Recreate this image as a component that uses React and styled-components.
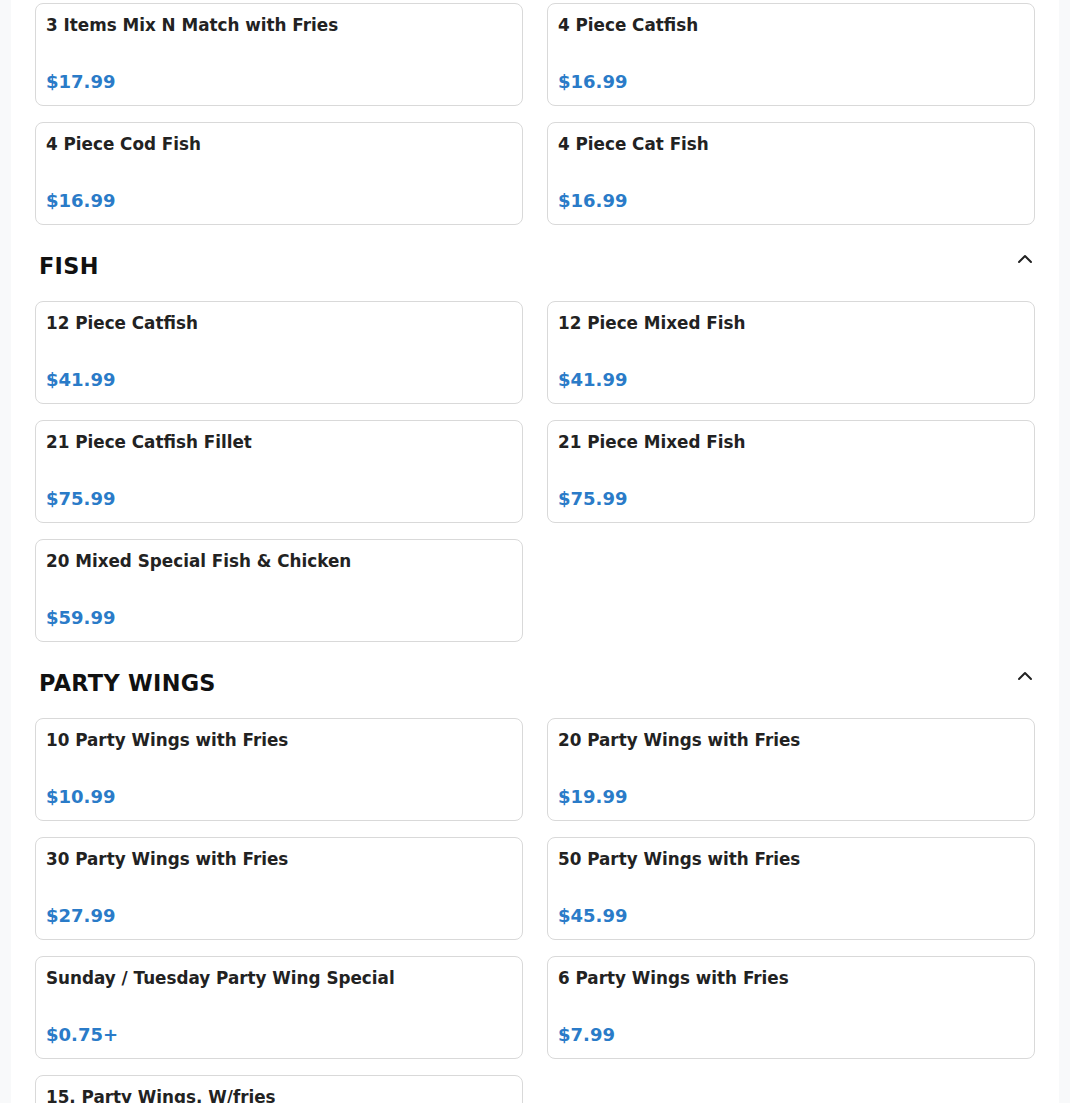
import React from 'react';
import styled, { createGlobalStyle } from 'styled-components';
import { ChevronUp } from 'lucide-react';

const GlobalStyle = createGlobalStyle`
  html, body {
    margin: 0;
    padding: 0;
    background: #f8f9fa;
    font-family: 'DejaVu Sans', 'Liberation Sans', sans-serif;
  }
`;

const Panel = styled.div`
  margin: 0 11px;
  min-height: 1103px;
  background: #fff;
  padding: 3px 24px 0;
  box-sizing: border-box;
`;

const SectionHead = styled.div`
  display: flex;
  align-items: flex-start;
  justify-content: space-between;
  padding: 28px 0 22px 4px;
`;

const SectionTitle = styled.h2`
  margin: 0;
  font-size: 22.4px;
  line-height: 26px;
  font-weight: 700;
  letter-spacing: 0.3px;
  color: #111;
`;

const Toggle = styled.button`
  display: flex;
  padding: 0;
  margin: -6px -2px -6px 0;
  border: none;
  background: none;
  color: #222;
  cursor: pointer;
`;

const Grid = styled.div`
  display: grid;
  grid-template-columns: 1fr 1fr;
  column-gap: 24px;
  row-gap: 16px;
`;

const Card = styled.div`
  height: 103px;
  box-sizing: border-box;
  border: 1px solid #d9d9d9;
  border-radius: 8px;
  padding: 11px 10px 12px;
  display: flex;
  flex-direction: column;
  justify-content: space-between;
  background: #fff;
`;

const ItemName = styled.div`
  font-size: 16.8px;
  line-height: 20px;
  font-weight: 700;
  color: #222;
`;

const Price = styled.div`
  font-size: 18px;
  line-height: 22px;
  font-weight: 700;
  color: #2a7bc8;
`;

const sections = [
  {
    title: null,
    items: [
      ['3 Items Mix N Match with Fries', '$17.99'],
      ['4 Piece Catfish', '$16.99'],
      ['4 Piece Cod Fish', '$16.99'],
      ['4 Piece Cat Fish', '$16.99'],
    ],
  },
  {
    title: 'FISH',
    items: [
      ['12 Piece Catfish', '$41.99'],
      ['12 Piece Mixed Fish', '$41.99'],
      ['21 Piece Catfish Fillet', '$75.99'],
      ['21 Piece Mixed Fish', '$75.99'],
      ['20 Mixed Special Fish & Chicken', '$59.99'],
    ],
  },
  {
    title: 'PARTY WINGS',
    items: [
      ['10 Party Wings with Fries', '$10.99'],
      ['20 Party Wings with Fries', '$19.99'],
      ['30 Party Wings with Fries', '$27.99'],
      ['50 Party Wings with Fries', '$45.99'],
      ['Sunday / Tuesday Party Wing Special', '$0.75+'],
      ['6 Party Wings with Fries', '$7.99'],
      ['15. Party Wings. W/fries', '$15.99'],
    ],
  },
];

export default function App() {
  return (
    <>
      <GlobalStyle />
      <Panel>
        {sections.map((section, i) => (
          <section key={i}>
            {section.title && (
              <SectionHead>
                <SectionTitle>{section.title}</SectionTitle>
                <Toggle aria-label="collapse">
                  <ChevronUp size={24} strokeWidth={2} />
                </Toggle>
              </SectionHead>
            )}
            <Grid>
              {section.items.map(([name, price], j) => (
                <Card key={j}>
                  <ItemName>{name}</ItemName>
                  <Price>{price}</Price>
                </Card>
              ))}
            </Grid>
          </section>
        ))}
      </Panel>
    </>
  );
}
